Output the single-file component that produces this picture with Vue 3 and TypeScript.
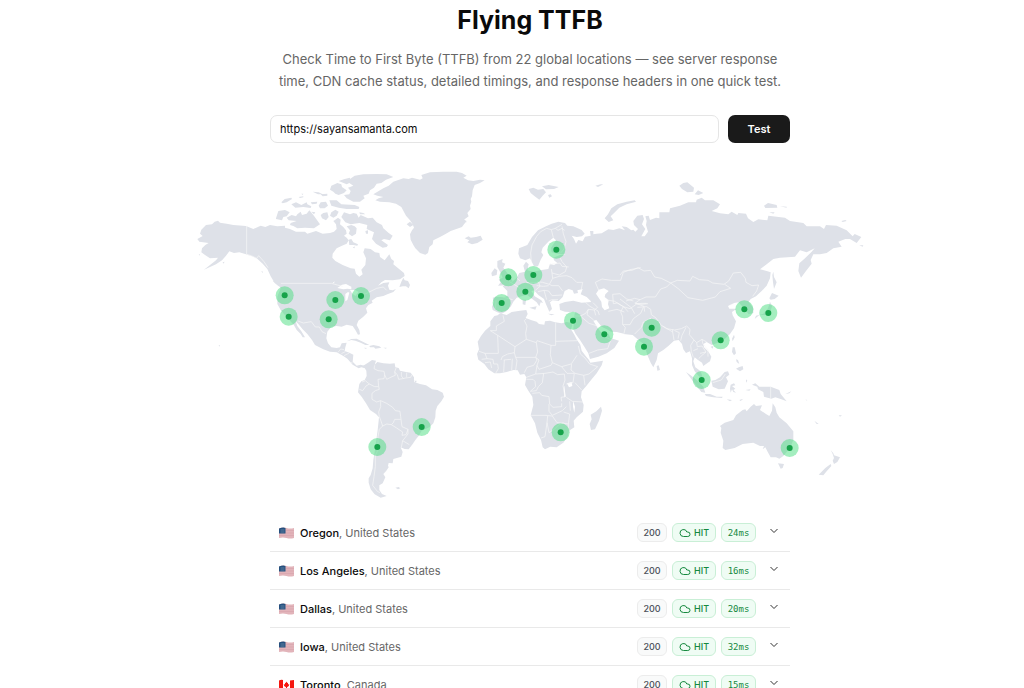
<script setup lang="ts">
import { ref } from 'vue'

type Segment = [dx: number, dy: number, points: string]

/** Joins coordinate runs, each with its own origin, into one SVG path. */
function trace(segments: Segment[], closed = true): string {
  const points: string[] = []
  for (const [dx, dy, run] of segments) {
    const n = run.trim().split(/[\s,]+/).map(Number)
    for (let i = 0; i < n.length; i += 2) points.push(`${n[i] + dx} ${n[i + 1] + dy}`)
  }
  return `M${points.join('L')}${closed ? 'Z' : ''}`
}

const shapes = (dx: number, dy: number, runs: string[]) => runs.map((r) => trace([[dx, dy, r]])).join('')
const lines = (dx: number, dy: number, runs: string[]) => runs.map((r) => trace([[dx, dy, r]], false)).join('')

const northAmerica = trace([
  [0, 0, '22 222 38 213 30 206 34 194 48 180 66 178 74 170 84 167 90 173 110 176 130 180 168 183 190 192 212 182 226 186 240 180 262 184 285 182 285 188 300 192 318 200 345 200 352 206 378 198 398 206 420 204 432 200 440 192 438 178 430 168 436 164 444 158 452 164 450 178 460 186 468 196 470 206 462 212 470 218 476 226 470 236 456 242 440 250 428 266 427 278 436 288 458 300 482 310'],
  [480, 0, '14 311 18 326 28 335 38 328 34 314 46 300 48 280 40 262 44 250 62 252 75 262 88 264 90 276 104 286 118 268 124 282 132 288 130 298 150 314 162 324 164 333 150 343 128 346 105 345 94 352 84 362 100 354 118 352 114 362 118 374 128 376 138 372 130 381 112 388'],
  [0, 345, '580 48 560 52 545 62 548 68 535 75 528 85 532 98 520 110 505 122 500 135 508 150 510 163 504 164 496 150 488 138 470 134 455 140 440 138 424 140 412 155 409 175 414 190 424 202 440 204 450 202 455 190 470 188 466 202 464 213 478 218 490 224 488 245 500 257 512 254 524 258 526 265 514 262 506 265 488 254 472 236 460 228 440 217 420 215 400 208 375 195 366 180 352 162 338 148 325 132 317 124 322 138 334 154 345 172 338 172 332 162 320 150 312 136 300 122 280 100 272 90 262 72 262 50 272 25 262 12 250 2'],
  [0, 0, '242 334 232 312 218 296 200 280 186 274 168 268 148 262 132 264 118 259 108 272 96 286 78 298 60 306 42 314 60 300 78 286 84 278 60 280 45 270 34 262 36 250 46 240 56 234 28 230'],
])

const arcticIslands = shapes(0, 0, [
  '258 160 265 138 285 135 299 142 290 154 280 156 276 166 258 162',
  '290 158 305 150 318 154 322 148 332 140 336 150 350 146 358 136 370 150 376 158 390 178 372 190 345 188 322 190 310 183 300 180 302 174 320 168 296 166',
  '274 112 284 102 304 98 306 102 290 112 278 115',
  '304 118 318 112 334 120 350 112 352 118 364 124 362 129 340 126 316 128',
  '326 96 340 94 340 97 330 99', '334 86 340 86 338 90',
  '368 80 386 82 398 88 384 88', '392 88 412 86 412 92 398 94',
  '362 112 382 110 380 116 366 118', '386 122 392 112 408 110 414 122 404 130 390 130',
  '392 150 400 144 412 142 416 156 408 166 396 160', '364 140 376 142 372 148',
  '418 106 440 106 454 118 494 120 508 126 506 132 470 132 446 128 424 122',
  '420 74 424 62 442 54 454 58 456 66 470 76 462 84 446 90 436 86 430 80',
  '446 48 464 42 480 38 480 42 494 32 520 28 560 27 590 28 610 36 588 44 574 54 560 56 552 68 540 76 536 86 520 92 524 100 510 110 490 110 470 100 462 90 478 88 482 78 474 68 490 62 478 54 470 58',
  '424 142 436 134 446 140 440 152 430 158 420 152',
  '454 156 462 142 480 148 490 144 500 146 506 158 512 150 534 160 548 158 560 172 576 180 580 190 596 204 608 212 600 226 582 222 574 226 594 240 590 246 578 248 558 236 546 222 552 202 530 192 532 180 508 174 482 178 466 172',
  '470 184 484 180 494 184 500 190 498 206 486 214 476 206 480 196',
  '476 224 484 222 490 232 504 238 502 242 490 240 478 240', '488 248 494 244 494 250',
  '526 198 534 196 534 206 528 206', '508 142 520 144 526 148 510 148',
  '550 88 580 70 596 62 610 50 640 40 656 42 666 38 690 44 698 40 694 30 720 22 760 20 800 20 816 24 830 32 820 38 834 46 850 48 870 44 884 46 870 54 854 60 848 76 846 94 842 102 844 110 840 122 842 132 832 144 836 154 822 164 830 168 822 178 816 186 782 198 768 206 750 216 730 226 728 238 718 246 714 264 706 269 690 264 676 250 670 240 662 224 660 208 666 196 672 188 668 178 660 166 648 152 634 126 618 116 598 112 570 110 556 106 566 100 580 96 562 92',
  '650 178 660 170 670 180 660 186', '812 158 820 160 830 172 818 172',
  '824 220 836 214 842 218 858 216 872 212 878 224 862 234 846 238 832 232 838 226',
  '628 366 634 350 640 338 644 346 654 348 660 360 656 370 648 364 638 364',
  '98 292 104 290 100 296', '26 268 30 268 29 272', '214 318 219 320 217 324',
  '248 347 262 352 272 362 266 364 254 354',
  '86 540 90 541 88 545',
])

const caribbean = shapes(0, 345, [
  '470 184 484 177 500 176 520 186 538 195 526 195 512 188 496 182 484 180',
  '538 198 550 195 568 199 574 203 556 206 552 202 540 202', '522 203 532 204 526 206', '580 203 590 203 588 206',
])

const southAmerica = shapes(450, 525, [
  '66 79 72 76 84 68 96 60 108 62 104 74 112 66 130 70 150 71 164 70 166 82 176 84 180 92 198 96 212 98 222 112 222 126 240 132 258 136 276 148 292 150 308 158 312 170 304 184 292 198 287 212 286 232 280 250 268 262 245 272 238 285 226 300 218 312 206 328 194 327 182 322 188 336 184 350 160 357 158 370 146 369 144 377 146 382 139 392 130 402 136 412 128 430 118 436 118 450 126 462 140 468 122 473 104 463 92 448 86 428 86 415 92 405 98 385 100 360 104 335 109 300 113 270 117 232 108 222 90 210 78 190 66 172 54 157 56 144 58 132 64 124 74 120 80 108 79 92 74 84',
  '166 443 176 441 181 445 174 448', '222 122 230 122 228 128',
])

const africa = shapes(825, 375, [
  '88 78 98 76 105 70 125 75 140 66 165 62 184 60 188 72 182 84 200 91 215 95 222 102 238 104 240 94 255 92 270 97 290 100 305 96 318 98 322 106 318 118 328 134 336 150 346 164 350 182 362 198 372 210 376 218 395 215 414 212 410 226 395 250 380 268 362 290 350 304 348 322 356 345 354 365 335 382 326 392 328 412 312 422 308 440 295 458 275 472 256 470 240 478 233 472 228 450 217 428 210 400 197 376 205 345 202 320 190 302 180 285 184 262 178 252 165 254 158 241 146 240 125 246 105 250 88 250 70 238 58 222 40 209 36 192 42 178 38 155 48 138 60 122 76 108 76 94',
  '408 350 411 362 402 392 390 418 378 420 374 402 380 388 377 374 394 364',
])

const eurasia = trace([
  [840, 0, '228 184 245 176 265 170 285 174 292 182 310 184 335 195 344 206 336 214 320 216 305 212 312 222 318 236 325 225 338 229 345 215 362 212 360 198 370 198 370 208 380 206 395 205 415 193 430 195 448 190 465 196 455 184 470 186 484 196'],
  [1290, 0, '40 194 46 200 54 192 42 180 40 168 52 152 68 150 72 162 66 178 76 192 64 214 74 214 84 200 78 180 80 168 76 154 86 152 90 165 108 158 118 160 118 142 148 142 150 130 180 122 205 112 228 112 230 104 245 98 255 106 280 106 300 118 292 130 275 138 300 145 325 148 335 140 352 150 355 144 378 146 384 160 400 171 415 163 442 166 445 152 470 155 495 158 510 168 550 174 560 184 600 184 612 192 618 180 650 182 680 196 698 214 704 207 724 216 710 234 690 222 676 222 655 230 665 245 640 250 620 264 600 268 580 268 572 285 575 296 558 318 543 338 535 318 538 295 555 280 575 260 584 250 560 262 540 256 525 275 480 278 460 282 440 298 420 313 440 318 452 322 450 340 440 362 425 378 408 394 392 402 386 410 400 430 400 444 386 448 376 436 366 424 356 412 342 414 330 422'],
  [1230, 375, '400 40 384 48 388 56 410 56 396 66 398 76 408 94 402 115 390 132 375 146 354 158 335 165 320 156 310 162 312 172 326 186 334 200 330 214 318 222 310 228 306 218 294 210 284 202 280 214 286 232 302 244 308 262 298 260 284 244 276 225 276 205 270 184 258 189 250 178 246 162 236 150 222 152 205 168 190 180 174 190 170 210 160 232 152 218 142 195 135 172 128 160 118 152 98 135 70 132'],
  [825, 375, '480 132 455 126 438 125 425 118 410 110 394 90 385 92 398 114 412 132 426 140 430 130 436 144 462 152 448 174 425 190 400 200 375 207 370 190 358 170 345 150 332 132 325 118 326 98 328 78 330 66 314 66 300 65 285 60 283 42 300 36 325 32 350 38 378 36'],
  [840, 0, '362 408 350 396 332 388 338 372 322 376 324 384 312 386 308 376 296 372 284 378 278 396 272 402 266 408 248 406 240 412 246 432 238 440 228 418 222 402 205 390 192 376 184 378 194 394 214 406 219 414 212 412 208 424 200 412 184 400 172 390 160 392 140 398 130 410 122 425 110 438 95 446 82 442 68 435 66 425 72 410 68 398 80 395 100 397 112 393 112 378 98 364 108 358 125 352 140 338 148 324 165 320 160 302 168 290 176 298 172 316 190 320 215 315 235 312 240 296 252 300 262 294 252 286 250 278 270 270 288 268 262 266 245 262 243 248 258 226 250 218 235 230 218 248 214 262 220 270 212 284 204 304 192 304 180 280 166 286 150 280 145 266 147 250 172 240 186 216 204 196'],
])

const nearIslands = [
  shapes(840, 0, [
    '82 288 98 282 96 292 106 296 100 308 110 322 122 338 128 348 112 360 84 362 92 352 86 344 98 338 90 320 82 306',
    '64 324 74 310 82 316 80 330 66 334',
    '176 72 190 68 204 74 220 72 228 82 218 92 208 104 194 94 182 84', '216 64 236 60 266 66 252 72 228 73', '234 90 242 88 246 94 238 98',
    '404 160 414 148 424 130 442 118 470 110 494 106 498 110 470 118 448 128 430 146 422 154 430 166 416 171',
    '376 62 392 58 400 58 384 66', '178 428 200 424 196 434', '158 404 168 404 166 420 158 418', '234 446 254 448 244 451',
  ]),
  shapes(1290, 0, [
    '178 62 190 54 202 52 222 68 220 80 202 82 186 72', '224 88 234 76 250 84 236 90',
    '432 122 444 114 470 120 472 128 436 129', '480 124 500 125 500 128', '448 142 464 142 460 146',
    '664 168 676 165 680 168 668 171', '718 241 730 241 728 245',
    '460 320 462 336 470 352 462 372 459 352 457 330',
    '448 400 456 384 476 392 464 402 452 404', '450 410 456 424 450 444 436 450 418 450 404 462 408 452 430 446 444 430',
  ]),
  shapes(1230, 375, [
    '170 228 176 226 180 240 172 242', '258 246 272 256 290 270 310 290 316 308 304 306 288 286 270 262',
    '314 312 330 312 350 320 368 320 366 324 340 322 318 318', '334 272 346 270 360 262 374 246 384 244 388 254 378 262 384 274 374 296 356 298 338 290',
    '332 170 340 168 338 176', '396 146 402 134 404 142 398 154', '398 172 404 172 408 190 402 196 396 186',
  ]),
  shapes(1470, 495, [
    '152 164 162 160 166 166 156 168 166 176 160 180 168 188 160 186 156 178 152 188 150 176', '168 88 174 90 178 102 170 96', '176 112 188 108 190 118 180 124 168 116', '140 208 156 210 150 214', '178 210 190 206 182 213',
    '198 148 202 152 198 158', '196 180 212 178 208 182', '216 164 226 160 238 170 252 170 272 170 298 180 302 192 320 214 304 208 286 202 274 206 252 200 250 186 234 178 232 170',
    '316 192 334 184 328 190', '350 188 356 192', '403 272 416 282 410 282', '476 256 486 256 480 260', '376 209 382 212 380 209',
    '120 288 134 278 160 270 168 256 188 240 196 238 200 244 212 230 222 222 228 228 246 226 240 240 258 252 268 258 276 242 278 220 286 232 290 248 298 262 320 280 340 304 340 330 330 354 310 378 298 386 288 382 272 382 262 364 256 352 248 358 252 348 240 348 220 338 188 342 164 354 136 360 128 354 130 332 122 308 124 294',
    '294 400 312 402 308 414 302 416', '452 360 460 370 462 376 480 382 472 396 462 402 458 392 462 384 458 372', '452 402 454 408 438 426 430 436 416 434 436 414',
  ]),
].join('')

const inlandWater = [
  shapes(0, 345, ['442 24 456 14 468 12 484 20 484 28 472 26 460 28', '466 42 474 36 478 38 472 60 466 64', '480 30 496 30 506 36 496 48 486 40', '428 9 434 4 432 10']),
  shapes(840, 0, ['378 386 386 374 402 370 416 378 406 388 404 396 416 406 414 418 418 430 404 436 396 426 394 410 386 398']),
  shapes(825, 375, ['306 280 320 276 322 288 312 292', '296 290 298 288 302 320 298 322', '324 332 330 350 328 368 324 350']),
].join('')

const borders = [
  lines(0, 0, [
    '170 182 170 268 184 272 200 280 206 272 222 290 234 308', '272 355 424 355 442 360 458 364',
    '500 392 528 386 560 370 580 366 590 376', '324 468 340 474 364 470 376 486 388 486 396 500 408 506',
    '444 562 452 552 462 554', '454 566 466 560', '462 572 478 564', '488 594 480 592',
  ]),
  lines(450, 525, [
    '104 76 102 86 114 92 132 94 134 104 132 116 114 118 116 140 118 148 106 152',
    '66 126 76 122 88 132 104 140 116 140', '58 148 68 152 78 138 88 132', '106 152 96 160 96 178 110 186 122 182',
    '134 104 140 118 156 110 166 106 164 96 168 84', '164 96 172 104 176 118 188 116 196 114 212 112 216 104', '184 96 184 108 190 116', '200 98 200 112',
    '122 182 122 200 116 216 118 230 122 240 128 258', '122 182 140 190 158 202 166 212 180 214 182 230 184 246',
    '128 258 118 268 114 290 114 330 106 346 106 380 102 410 98 436 112 454 120 458', '128 258 140 252 154 254 160 248 164 238 182 238',
    '154 254 170 264 188 276 186 286 198 284 204 268 186 260 184 246', '204 268 204 282 188 302 184 322', '188 302 208 314',
  ]),
  lines(825, 375, [
    '76 122 94 122 94 108 118 94 114 76', '76 122 98 136 150 170 184 148 182 130 186 108 178 92 184 86', '98 136 100 190 60 190 42 184', '60 190 66 206 84 208 86 222 98 222',
    '150 170 148 188 128 192 112 200 108 210', '184 148 214 158 216 152 258 166 272 166 272 98', '272 154 336 152', '258 166 256 194 262 218 290 230 318 222', '214 158 218 186 212 202 152 202 148 188',
    '212 202 216 210 206 226 186 232 178 248', '212 202 222 210 216 226 222 238 258 226 262 218', '216 226 212 252 184 262', '152 202 156 212 152 240', '142 206 140 240', '116 210 138 208', '118 210 116 246', '98 222 100 236 92 250', '66 206 50 208', '60 218 76 216 80 234',
    '336 196 320 220 318 240 330 250 356 256 372 252 398 230 374 222 360 204 346 192 340 168', '290 230 306 250 328 250 324 278 304 282', '356 256 360 286', '330 278 350 300',
    '212 252 240 250 264 246 278 254 298 252 300 270 294 288 300 320 288 322 290 334', '236 250 232 278 220 290 214 302 196 304', '184 268 204 268 210 274 212 290 196 304',
    '202 310 224 308 230 316 252 320 254 342 264 352 290 350 290 340', '252 342 252 364 262 376 292 362 304 350', '198 376 240 376 262 378', '248 378 246 398 240 440 228 444', '246 398 252 428 268 418 282 404 296 398', '262 378 276 398 296 400 310 402 314 372 296 366', '310 402 310 418 316 422', '304 322 322 334 354 336', '314 334 316 362',
    '346 78 362 70 370 58 388 60', '328 78 346 78 372 100 398 108', '370 58 366 74 386 90', '372 190 398 180 428 176 440 142', '420 140 438 150 442 142',
    '388 60 392 76', '388 60 398 52', '384 38 398 52', '430 64 456 58 478 66',
  ]),
  lines(840, 0, [
    '184 292 182 264 186 240 200 214 212 200 230 190 244 194 250 218', '244 194 256 190 276 178', '256 190 264 196 276 190 284 196', '276 184 280 206 288 230 282 252 272 264', '240 298 270 294 276 304', '270 278 276 290 290 306 286 320 268 330 246 324 244 312',
    '246 324 248 340 238 358 218 352 202 350', '248 340 268 334 290 332 306 338 320 352 338 352 334 372', '276 304 296 306', '238 358 246 362 266 362 278 378', '200 362 220 364 236 362', '204 380 222 376 236 378 246 392 276 390', '222 376 230 404', '236 408 246 404 264 404', '118 350 142 364 150 370', '142 340 150 348', '170 352 206 352 210 364 196 376',
    '98 396 128 404', '78 406 76 434', '386 376 376 352 396 342 424 346 452 346 460 322 480 314 512 308', '428 388 450 386 470 402 490 408', '428 388 430 416 442 414 462 426 474 440', '346 412 360 424 384 438 388 450',
  ]),
  lines(1290, 0, [
    '0 330 10 318 36 316 54 308 72 318 92 316 104 336 124 340 152 354 140 366 122 372 106 396 78 396 60 404 44 400 18 408', '152 354 172 346 210 348 218 334 238 344 264 346 278 354 312 358 326 348 340 324 362 322 376 340 378 352 396 362 416 360 410 378 398 394',
    '152 354 176 372 204 398 248 406 286 396 300 380 332 370 314 358', '60 404 46 414 64 418 84 416', '44 414 72 424 74 440', '0 402 34 428 44 446',
  ]),
  lines(1230, 375, [
    '22 30 44 34 70 50 62 66 68 80 68 104 76 112 72 130', '70 50 90 56 110 42 126 40 140 40', '68 104 90 104 100 86 122 70 130 52', '112 52 140 50 152 58 154 74 168 84', '154 84 130 96 124 112 104 132', '168 84 184 106 200 116 224 120 244 116 260 108 270 118 268 134 282 150 290 158 306 148 320 156',
    '188 108 218 126 218 118', '218 126 222 150', '224 122 238 128 234 146', '258 112 246 136 242 152', '282 150 272 166 274 184 280 202', '290 158 292 170 306 168 318 186 306 196 296 206', '306 148 308 160 324 180 324 200', '280 182 294 176', '318 186 300 190',
  ]),
  lines(1470, 495, ['272 170 272 206', '98 158 124 150 136 132']),
].join('')

const markers: [number, number][] = [
  [284, 391], [296, 455], [416, 463], [436, 405], [513, 393], [695, 786], [562, 846], [955, 337],
  [1030, 330], [1006, 380], [935, 414], [1099, 254], [1149, 467], [1243, 508], [1112, 802], [1385, 488],
  [1362, 545], [1535, 645], [1592, 526], [1663, 433], [1735, 444], [1799, 849],
]

interface Result { city: string; country: string; flag: 'us' | 'ca'; status: number; cache: string; ttfb: number }

const results: Result[] = [
  { city: 'Oregon', country: 'United States', flag: 'us', status: 200, cache: 'HIT', ttfb: 24 },
  { city: 'Los Angeles', country: 'United States', flag: 'us', status: 200, cache: 'HIT', ttfb: 16 },
  { city: 'Dallas', country: 'United States', flag: 'us', status: 200, cache: 'HIT', ttfb: 20 },
  { city: 'Iowa', country: 'United States', flag: 'us', status: 200, cache: 'HIT', ttfb: 32 },
  { city: 'Toronto', country: 'Canada', flag: 'ca', status: 200, cache: 'HIT', ttfb: 15 },
]

const url = ref('https://sayansamanta.com')
</script>

<template>
  <main class="page">
    <header class="intro">
      <h1>Flying TTFB</h1>
      <p>Check Time to First Byte (TTFB) from 22 global locations — see server response time, CDN cache status, detailed timings, and response headers in one quick test.</p>
    </header>

    <form class="search" @submit.prevent>
      <input v-model="url" type="text" aria-label="Website URL" />
      <button type="submit">Test</button>
    </form>

    <svg class="map" viewBox="0 0 2040 1020" role="img" aria-label="Test locations">
      <path class="land" :d="northAmerica + arcticIslands + caribbean" />
      <path class="land" :d="southAmerica" />
      <path class="land" :d="africa" />
      <path class="land" :d="eurasia" />
      <path class="land" :d="nearIslands" />
      <path class="water" :d="inlandWater" />
      <path class="border" :d="borders" />
      <g v-for="([x, y], i) in markers" :key="i">
        <circle class="halo" :cx="x" :cy="y" r="27" />
        <circle class="dot" :cx="x" :cy="y" r="9" />
      </g>
    </svg>

    <ul class="results">
      <li v-for="r in results" :key="r.city">
        <svg v-if="r.flag === 'us'" class="flag" viewBox="0 0 15 12" aria-hidden="true">
          <path d="M0 1.5Q4 0 7.5 1T15 1V11Q11 12 7.5 11T0 11Z" fill="#e2b4ba" />
          <path d="M7 3.5H15M7 6H15M0 8.5H15" stroke="#d9a5ad" stroke-width=".7" />
          <path d="M0 1.5Q4 0 6.500 1V6.500H0Z" fill="#24507f" />
          <path d="M1.500 3H5.500M1.500 5H5.500" stroke="#7893b0" stroke-width=".7" />
        </svg>
        <svg v-else class="flag" viewBox="0 0 15 12" aria-hidden="true">
          <path d="M0 1.500Q4 0 7.500 1T15 1V11Q11 12 7.500 11T0 11Z" fill="#fff" />
          <path d="M0 1.500Q2 .5 4 1V11Q2 11 0 11ZM11 1.500L15 1V11L11 11.500Z" fill="#f5160f" />
          <path d="M7.500 2.500L8.300 4L9 3.700V5.500L10.300 5L9.800 7L8 8.300V9.500H7V8.300L5.200 7L4.700 5L6 5.500V3.700L6.700 4Z" fill="#f5160f" />
        </svg>
        <span class="place"><strong>{{ r.city }}</strong>, {{ r.country }}</span>
        <span class="badge status">{{ r.status }}</span>
        <span class="badge hit">
          <svg viewBox="0 0 24 24" aria-hidden="true"><path d="M17.500 19H9a7 7 0 1 1 6.710-9h1.790a4.500 4.500 0 1 1 0 9Z" /></svg>
          {{ r.cache }}
        </span>
        <span class="badge time">{{ r.ttfb }}ms</span>
        <button class="toggle" type="button" :aria-label="`Show details for ${r.city}`">
          <svg viewBox="0 0 10 10" aria-hidden="true"><path d="M1.500 3L5 6.500L8.500 3" /></svg>
        </button>
      </li>
    </ul>
  </main>
</template>

<style>
body {
  margin: 0;
  background: #fff;
}
</style>

<style scoped>
.page {
  display: flex;
  flex-direction: column;
  align-items: center;
  padding: 4px 0 0 36px;
  font-family: Inter, "Liberation Sans", sans-serif;
  color: #0a0a0a;
}
.intro {
  width: 100%;
  max-width: 520px;
  text-align: center;
}
h1 {
  margin: 0;
  font-size: 25px;
  line-height: 32px;
  font-weight: 700;
}
.intro p {
  margin: 12px 0 0;
  font-size: 13px;
  line-height: 22px;
  color: #666;
}
.search {
  display: flex;
  gap: 9px;
  width: 100%;
  max-width: 520px;
  margin-top: 23px;
}
.search input {
  flex: 1;
  min-width: 0;
  box-sizing: border-box;
  height: 28px;
  padding: 0 9px;
  border: 1px solid #e5e5e5;
  border-radius: 7px;
  background: #fff;
  font: 400 11px Inter, "Liberation Sans", sans-serif;
  color: #0a0a0a;
}
.search button {
  width: 62px;
  height: 28px;
  padding: 0;
  border: 0;
  border-radius: 7px;
  background: #1a1a1a;
  font: 600 11px Inter, "Liberation Sans", sans-serif;
  color: #fff;
}
.map {
  display: block;
  width: 100%;
  max-width: 680px;
  margin-top: 22px;
}
.land {
  fill: #dee1e8;
}
.water {
  fill: #fff;
}
.border {
  fill: none;
  stroke: #f8f8f8;
  stroke-width: 2;
  stroke-linejoin: round;
}
.halo {
  fill: #4ade80;
  fill-opacity: 0.5;
}
.dot {
  fill: #16a34a;
}
.results {
  width: 100%;
  max-width: 520px;
  margin: 9px 0 0;
  padding: 0;
  list-style: none;
}
.results li {
  display: flex;
  align-items: center;
  box-sizing: border-box;
  height: 38px;
  padding: 0 9px;
  border-bottom: 1px solid #e9e9e9;
  font-size: 11px;
}
.flag {
  width: 15px;
  height: 12px;
  margin-right: 6px;
}
.place {
  flex: 1;
  color: #666;
}
.place strong {
  font-weight: 500;
  color: #0a0a0a;
}
.badge {
  display: flex;
  align-items: center;
  justify-content: center;
  gap: 3px;
  box-sizing: border-box;
  height: 19px;
  margin-left: 5px;
  padding: 0 5px;
  border: 1px solid #c9efd6;
  border-radius: 6px;
  background: #effcf4;
  font-size: 9px;
  font-weight: 500;
  color: #15893e;
}
.status {
  width: 30px;
  border-color: #ececec;
  background: #f9fafa;
  color: #4b5059;
}
.hit {
  width: 44px;
}
.badge svg {
  width: 12px;
  height: 12px;
  fill: none;
  stroke: currentColor;
  stroke-width: 2;
}
.time {
  width: 35px;
  font-family: "DejaVu Sans Mono", monospace;
  font-weight: 400;
}
.toggle {
  display: flex;
  width: 10px;
  height: 10px;
  margin: 0 2px 4px 13px;
  padding: 0;
  border: 0;
  background: none;
}
.toggle svg {
  width: 10px;
  height: 10px;
  fill: none;
  stroke: #333;
}
</style>
